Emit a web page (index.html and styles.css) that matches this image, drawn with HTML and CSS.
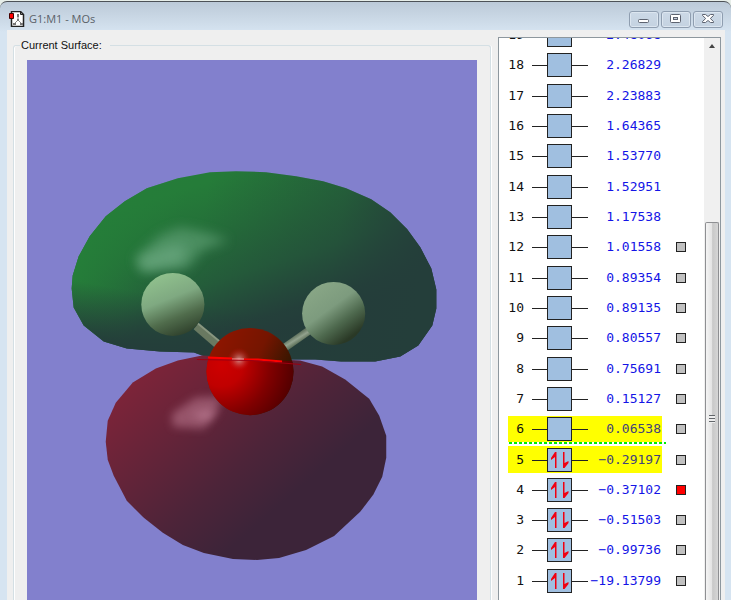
FILE: index.html
```html
<!DOCTYPE html>
<html lang="en">
<head>
<meta charset="utf-8">
<title>G1:M1 - MOs</title>
<link rel="stylesheet" href="styles.css">
</head>
<body>
<div class="window">
  <header class="titlebar">
    <svg class="app-icon" width="16" height="16" viewBox="0 0 16 16" aria-hidden="true">
      <path d="M2.500.5h9l3 3v12h-12z" fill="#fff" stroke="#222" stroke-width="1.500"/>
      <path d="M11.500.5v3h3" fill="none" stroke="#222"/>
      <path d="M9 5v5M9 9l-3 3M9 9l3 3" stroke="#888" fill="none"/>
      <path d="M8 3h2v3H8zM8 8h2v2H8zM4 12h3v2H4zM11 12h3v2h-3z" fill="#777"/>
      <path d="M.5 2.500h4v5h-4z" fill="#f00" stroke="#400"/>
    </svg>
    <h1 class="title">G1:M1 - MOs</h1>
    <div class="controls">
      <button class="control" aria-label="Minimize"><svg width="14" height="12" viewBox="0 0 14 12"><rect x="1.500" y="6.500" width="10" height="3" rx="1" fill="#fff" stroke="#5d6370"/></svg></button>
      <button class="control" aria-label="Restore"><svg width="14" height="12" viewBox="0 0 14 12"><rect x="1.500" y="1.500" width="10" height="8" rx="1" fill="#fff" stroke="#5d6370"/><rect x="4.500" y="4.500" width="4" height="2" fill="#c4cedb" stroke="#5d6370"/></svg></button>
      <button class="control" aria-label="Close"><svg width="14" height="12" viewBox="0 0 14 12"><path d="M1.500 1.500h3L7 3.500l2.500-2h3v1L9.300 5.500l3.200 3v1h-3L7 7.500l-2.500 2h-3v-1l3.200-3-3.200-3z" fill="#fff" stroke="#5d6370"/></svg></button>
    </div>
  </header>
  <main class="client">
    <fieldset class="surface">
      <legend>Current Surface:</legend>
      <svg class="viewport" viewBox="27 60 450 540" preserveAspectRatio="xMidYMin slice" role="img" aria-label="Molecular orbital surface">
        <defs>
          <linearGradient id="green" gradientUnits="userSpaceOnUse" x1="165" y1="195" x2="215" y2="350">
            <stop offset="0" stop-color="#257c39"/><stop offset=".3" stop-color="#246e39"/><stop offset=".6" stop-color="#245d3a"/><stop offset=".9" stop-color="#24403a"/><stop offset="1" stop-color="#243c3a"/>
          </linearGradient>
          <linearGradient id="side" gradientUnits="userSpaceOnUse" x1="200" y1="230" x2="424" y2="270">
            <stop offset="0" stop-color="#243e3a" stop-opacity="0"/><stop offset=".6" stop-color="#243e3a" stop-opacity=".35"/><stop offset="1" stop-color="#243e3a"/>
          </linearGradient>
          <linearGradient id="rim" gradientUnits="userSpaceOnUse" x1="72" y1="270" x2="150" y2="300">
            <stop offset="0" stop-color="#257e39"/><stop offset="1" stop-color="#257e39" stop-opacity="0"/>
          </linearGradient>
          <linearGradient id="base" gradientUnits="userSpaceOnUse" x1="130" y1="290" x2="120" y2="345">
            <stop offset="0" stop-color="#243e3a" stop-opacity="0"/><stop offset="1" stop-color="#243e3a"/>
          </linearGradient>
          <linearGradient id="wine" gradientUnits="userSpaceOnUse" x1="137" y1="377" x2="262" y2="520">
            <stop offset="0" stop-color="#7d2439"/><stop offset=".35" stop-color="#652439"/><stop offset=".7" stop-color="#4d2439"/><stop offset="1" stop-color="#3c2439"/>
          </linearGradient>
          <linearGradient id="hyd" x1=".3" y1="0" x2=".7" y2="1">
            <stop offset="0" stop-color="#91c28e"/><stop offset=".4" stop-color="#7fa981"/><stop offset=".7" stop-color="#506c4c"/><stop offset="1" stop-color="#2c3d29"/>
          </linearGradient>
          <linearGradient id="hyd2" x1=".25" y1=".1" x2=".8" y2=".85">
            <stop offset="0" stop-color="#87a585"/><stop offset=".4" stop-color="#7d9b7e"/><stop offset=".7" stop-color="#4e694e"/><stop offset="1" stop-color="#2a3926"/>
          </linearGradient>
          <linearGradient id="oxyTop" x1=".2" y1="0" x2="1" y2=".4">
            <stop offset="0" stop-color="#8d1500"/><stop offset=".55" stop-color="#751500"/><stop offset="1" stop-color="#301600"/>
          </linearGradient>
          <radialGradient id="oxy" gradientUnits="userSpaceOnUse" cx="221" cy="364" r="73">
            <stop offset="0" stop-color="#ce0000"/><stop offset=".3" stop-color="#c00000"/><stop offset=".68" stop-color="#800000"/><stop offset="1" stop-color="#540000"/>
          </radialGradient>
          <linearGradient id="bond" gradientUnits="userSpaceOnUse" x1="292" y1="337" x2="297" y2="345">
            <stop offset="0" stop-color="#637561"/><stop offset=".4" stop-color="#92a28d"/><stop offset="1" stop-color="#4c6049"/>
          </linearGradient>
          <radialGradient id="spot"><stop offset="0" stop-color="#d1a09b"/><stop offset="1" stop-color="#c00000" stop-opacity="0"/></radialGradient>
          <clipPath id="ball"><circle cx="250" cy="371" r="43.500"/></clipPath>
          <filter id="soft" x="-30%" y="-40%" width="160%" height="180%"><feGaussianBlur stdDeviation="6"/></filter>
          <filter id="fine" x="-30%" y="-40%" width="160%" height="180%"><feGaussianBlur stdDeviation="4"/></filter>
          <path id="top-lobe" d="M72 288L73 275 79 256 90 236 106 216 125 201 147 188 178 178 210 172 236 171 266 172 296 176 323 181 346 188 371 199 390 212 407 229 420 247 431 268 436 289 436 308 432 325 418 345 400 356 375 361 341 361 315 359 287 359 205 356 194 352 160 351 127 348 104 341 84 325 74 307Z"/>
        </defs>
        <rect x="27" y="60" width="450" height="540" fill="#8280cd"/>
        <use href="#top-lobe" fill="url(#green)"/>
        <use href="#top-lobe" fill="url(#rim)"/>
        <use href="#top-lobe" fill="url(#base)"/>
        <use href="#top-lobe" fill="url(#side)"/>
        <path d="M135 258L160 235 180 227 205 232 229 240 202 250 188 268 142 272Z" fill="#66a67b" opacity=".6" filter="url(#soft)"/>
        <path d="M138 259L172 245 187 246 181 263 144 270Z" fill="#77b38c" opacity=".5" filter="url(#soft)"/>
        <path d="M106 441L108 420 116 402 133 382 156 368 178 360 202 355 300 360 322 366 345 379 369 398 379 415 386 435 386 457 382 476 373 494 360 511 334 535 306 549 279 557 257 559 233 558 204 552 183 544 163 532 144 517 127 500 114 475 108 459Z" fill="url(#wine)"/>
        <path d="M172 413L196 397 224 396 212 412 205 428 173 426Z" fill="#b7758b" opacity=".6" filter="url(#fine)"/>
        <path d="M190 413L221 406 210 422Z" fill="#c28199" opacity=".6" filter="url(#fine)"/>
        <path d="M196 326L218 345" stroke="#697961" stroke-width="7"/>
        <path d="M198 323L221 342" stroke="#899780" stroke-width="2"/>
        <path d="M309 330L282 349" stroke="url(#bond)" stroke-width="8"/>
        <circle cx="173" cy="304" r="31.500" fill="url(#hyd)"/>
        <circle cx="333.500" cy="313" r="31.500" fill="url(#hyd2)"/>
        <circle cx="250" cy="371" r="43.500" fill="url(#oxyTop)"/>
        <path d="M200 357L300 361V420H200Z" fill="url(#oxy)" clip-path="url(#ball)"/>
        <circle cx="239" cy="359" r="12" fill="url(#spot)" opacity=".9"/>
        <path d="M208 357L232 358M244 359L258 359 282 361" fill="none" stroke="#f00" stroke-width="2"/>
        <path d="M232 358.500h12" stroke="#f99" stroke-width="1"/>
        <path d="M197 359L252 360 301 364" fill="none" stroke="#9c0012" stroke-width="1"/>
      </svg>
    </fieldset>
    <section class="orbitals" aria-label="Orbital energies">
      <div class="list">
        <table>
          <tbody id="levels"></tbody>
        </table>
      </div>
      <div class="scrollbar" aria-hidden="true"><div class="up"></div><div class="thumb"><span class="grip"></span></div></div>
    </section>
  </main>
</div>
<script src="orbitals.js"></script>
</body>
</html>
```
FILE: styles.css
```css
* { box-sizing: border-box; }
body { margin: 0; height: 100vh; overflow: hidden; background: #e7eee9; font-family: "Liberation Sans", sans-serif; }
.window { display: flex; flex-direction: column; height: 100vh; margin-top: 1px; padding: 0 6px 0 7px; border-top: 1px solid #4d5257; border-radius: 7px 7px 0 0; background: linear-gradient(#bccad8, #d6e4f1 30px); }
.titlebar { display: flex; flex: none; align-items: center; height: 28px; padding: 6px 2px 0 2px; }
.app-icon { flex: none; }
.title { flex: 1; margin: 0 0 0 4px; color: #5a6168; font: 11px/16px "Open Sans", sans-serif; }
.controls { display: flex; gap: 2px; }
.control { display: flex; align-items: center; justify-content: center; width: 30px; height: 17px; padding: 0; border: 1px solid #8f9eb0; border-radius: 3px; background: linear-gradient(#ccd9e6, #c4d2e1); box-shadow: inset 0 0 0 1px #dce6f0; }
.client { display: flex; flex: 1; gap: 7px; min-height: 0; padding: 7px 4px 0 6px; background: #efefef; }
.surface { display: flex; flex: 1; min-width: 0; margin: 1px 0 0; padding: 8px 13px 0; border: 1px solid #d4dfe4; border-bottom: 0; box-shadow: inset 1px 0 #fff, 1px 0 #fff; border-radius: 3px 3px 0 0; }
.surface legend { margin-left: -7px; padding: 0 8px 0 1px; color: #111; font: 11px/14px "Liberation Sans", sans-serif; }
.viewport { display: block; width: 100%; height: 100%; }
.orbitals { display: flex; flex: none; width: 223px; overflow: hidden; border: 2px solid #8d979e; border-width: 1px 1px 0; background: #fff; }
.list { flex: 1; overflow: hidden; padding-left: 9px; }
table { height: 580px; margin-top: -20px; border-spacing: 0 4px; border-collapse: separate; }
td, th { padding: 0; vertical-align: middle; font: 13px/16px "DejaVu Sans Mono", monospace; }
.number { width: 16px; color: #111; text-align: right; }
.box { width: 64px; padding-left: 8px; }
.box svg { display: block; overflow: visible; }
.energy { position: relative; width: 74px; color: #1414e6; text-align: right; white-space: nowrap; }
.energy span { float: right; padding-right: 1px; }
.mark { width: 24px; padding-left: 14px; }
.mark input { display: block; width: 10px; height: 10px; margin: 0; border: 1px solid #222; background: #c0c0c0; appearance: none; }
.mark input:checked { background: #f00; }
.frontier .number, .frontier .box, .frontier .energy { background: #ff0; }
.frontier .energy { color: #42427c; }
.homo { position: relative; }
.homo .number::before { position: absolute; top: -4px; left: 1px; width: 157px; height: 2px; background: repeating-linear-gradient(90deg, #0e0 0 3px, transparent 3px 5px); content: ""; }
.scrollbar { display: flex; flex: none; flex-direction: column; width: 16px; background: #f0f0f0; }
.up { flex: none; align-self: center; width: 0; margin: 6px 0 178px; border: 3px solid transparent; border-top: 0; border-bottom: 4px solid #444; }
.thumb { display: flex; flex: 1; align-items: flex-start; justify-content: center; margin: -4px 1px 0; padding-top: 192px; border: 1px solid #8e8f92; border-bottom: 0; border-radius: 2px 2px 0 0; background: linear-gradient(90deg, #f4f4f4, #e3e3e3 50%, #c8c8c8 55%, #d6d6d6); }
.grip { width: 6px; height: 8px; background: repeating-linear-gradient(#62666a 0 1px, #eee 1px 3px); }
```
FILE: orbitals.js
```js
const energies = [
  "−19.13799", "−0.99736", "−0.51503", "−0.37102", "−0.29197",
  "0.06538", "0.15127", "0.75691", "0.80557", "0.89135", "0.89354", "1.01558",
  "1.17538", "1.52951", "1.53770", "1.64365", "2.23883", "2.26829", "2.48068"
];
const occupied = 5;
const electrons = '<path d="M23 4h1.500v16H23V9l-4 3v-2zM31 4h1.500v11l4-2v2l-4 5H31z" fill="#f00010"/>';
const body = document.getElementById("levels");
for (let n = energies.length; n >= 1; n--) {
  const row = document.createElement("tr");
  if (n === occupied || n === occupied + 1) row.classList.add("frontier");
  if (n === occupied) row.classList.add("homo");
  const mark = n <= 12 ? `<input type="checkbox" aria-label="Orbital ${n}"${n === 4 ? " checked" : ""}>` : "";
  row.innerHTML = `<th class="number" scope="row">${n}</th>
    <td class="box"><svg width="56" height="24" viewBox="0 0 56 24"><path d="M0 12.500h56" stroke="#222"/><rect x="15.500" y=".5" width="24" height="23" fill="#a0bfe0" stroke="#222"/>${n <= occupied ? electrons : ""}</svg></td>
    <td class="energy"><span>${energies[n - 1]}</span></td>
    <td class="mark">${mark}</td>`;
  body.append(row);
}
```
